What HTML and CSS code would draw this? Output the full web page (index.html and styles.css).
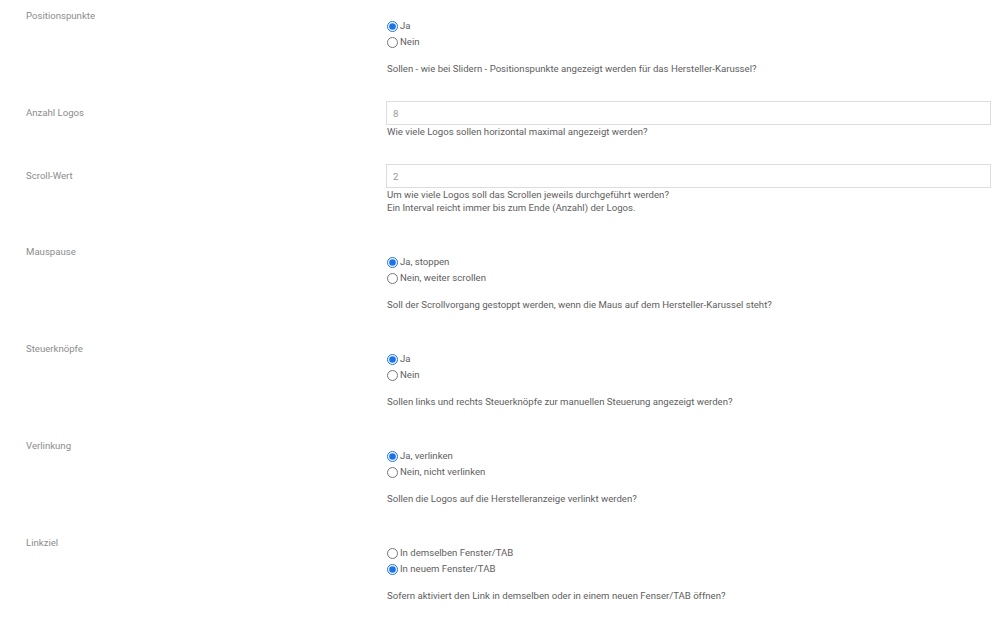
FILE: index.html
```html
<!DOCTYPE html>
<html lang="de">
<head>
<meta charset="utf-8">
<title>Hersteller-Karussel</title>
<link rel="stylesheet" href="styles.css">
</head>
<body>
<div class="form">
  <div class="row">
    <div class="label">Positionspunkte</div>
    <div class="field">
      <div class="radios">
        <label class="opt"><input type="radio" name="p" checked>Ja</label>
        <label class="opt"><input type="radio" name="p">Nein</label>
      </div>
      <p class="desc">Sollen - wie bei Slidern - Positionspunkte angezeigt werden für das Hersteller-Karussel?</p>
    </div>
  </div>
  <div class="row row-input">
    <div class="label">Anzahl Logos</div>
    <div class="field">
      <input class="text" type="text" value="8">
      <p class="help">Wie viele Logos sollen horizontal maximal angezeigt werden?</p>
    </div>
  </div>
  <div class="row row-input">
    <div class="label">Scroll-Wert</div>
    <div class="field">
      <input class="text" type="text" value="2">
      <p class="help">Um wie viele Logos soll das Scrollen jeweils durchgeführt werden?<br>Ein Interval reicht immer bis zum Ende (Anzahl) der Logos.</p>
    </div>
  </div>
  <div class="row">
    <div class="label">Mauspause</div>
    <div class="field">
      <div class="radios">
        <label class="opt"><input type="radio" name="m" checked>Ja, stoppen</label>
        <label class="opt"><input type="radio" name="m">Nein, weiter scrollen</label>
      </div>
      <p class="desc">Soll der Scrollvorgang gestoppt werden, wenn die Maus auf dem Hersteller-Karussel steht?</p>
    </div>
  </div>
  <div class="row">
    <div class="label">Steuerknöpfe</div>
    <div class="field">
      <div class="radios">
        <label class="opt"><input type="radio" name="s" checked>Ja</label>
        <label class="opt"><input type="radio" name="s">Nein</label>
      </div>
      <p class="desc">Sollen links und rechts Steuerknöpfe zur manuellen Steuerung angezeigt werden?</p>
    </div>
  </div>
  <div class="row">
    <div class="label">Verlinkung</div>
    <div class="field">
      <div class="radios">
        <label class="opt"><input type="radio" name="v" checked>Ja, verlinken</label>
        <label class="opt"><input type="radio" name="v">Nein, nicht verlinken</label>
      </div>
      <p class="desc">Sollen die Logos auf die Herstelleranzeige verlinkt werden?</p>
    </div>
  </div>
  <div class="row">
    <div class="label">Linkziel</div>
    <div class="field">
      <div class="radios">
        <label class="opt"><input type="radio" name="l">In demselben Fenster/TAB</label>
        <label class="opt"><input type="radio" name="l" checked>In neuem Fenster/TAB</label>
      </div>
      <p class="desc">Sofern aktiviert den Link in demselben oder in einem neuen Fenser/TAB öffnen?</p>
    </div>
  </div>
</div>
</body>
</html>
```
FILE: styles.css
```css
html, body {
  margin: 0;
  padding: 0;
  background: #fff;
}
body {
  font-family: Roboto, "Liberation Sans", Arial, sans-serif;
  font-size: 9.6px;
  color: #5e5e5e;
}
.form {
  padding-top: 4px;
}
.row {
  display: flex;
  align-items: flex-start;
  padding-bottom: 24px;
}
.row-input {
  padding-bottom: 26px;
}
.label {
  width: 360px;
  margin-left: 26px;
  margin-top: 4px;
  line-height: 16px;
  color: #8c8c8c;
}
.field {
  width: 605px;
}
.radios {
  margin-top: 14px;
  display: flex;
  flex-direction: column;
}
.opt {
  display: flex;
  align-items: center;
  height: 16px;
  line-height: 16px;
  color: #5e5e5e;
}
.opt input {
  width: 11px;
  height: 11px;
  margin: 0 2px 0 1px;
  accent-color: #1a73e8;
}
.desc {
  margin: 11px 0 0 1px;
  line-height: 16px;
}
.text {
  display: block;
  box-sizing: border-box;
  width: 605px;
  height: 24px;
  margin: 0;
  padding: 0 6px;
  border: 1px solid #ddd;
  border-radius: 0;
  font-family: inherit;
  font-size: 9.6px;
  color: #999;
  background: #fff;
  outline: none;
}
.help {
  margin: 0 0 0 1px;
  line-height: 13px;
}
```
